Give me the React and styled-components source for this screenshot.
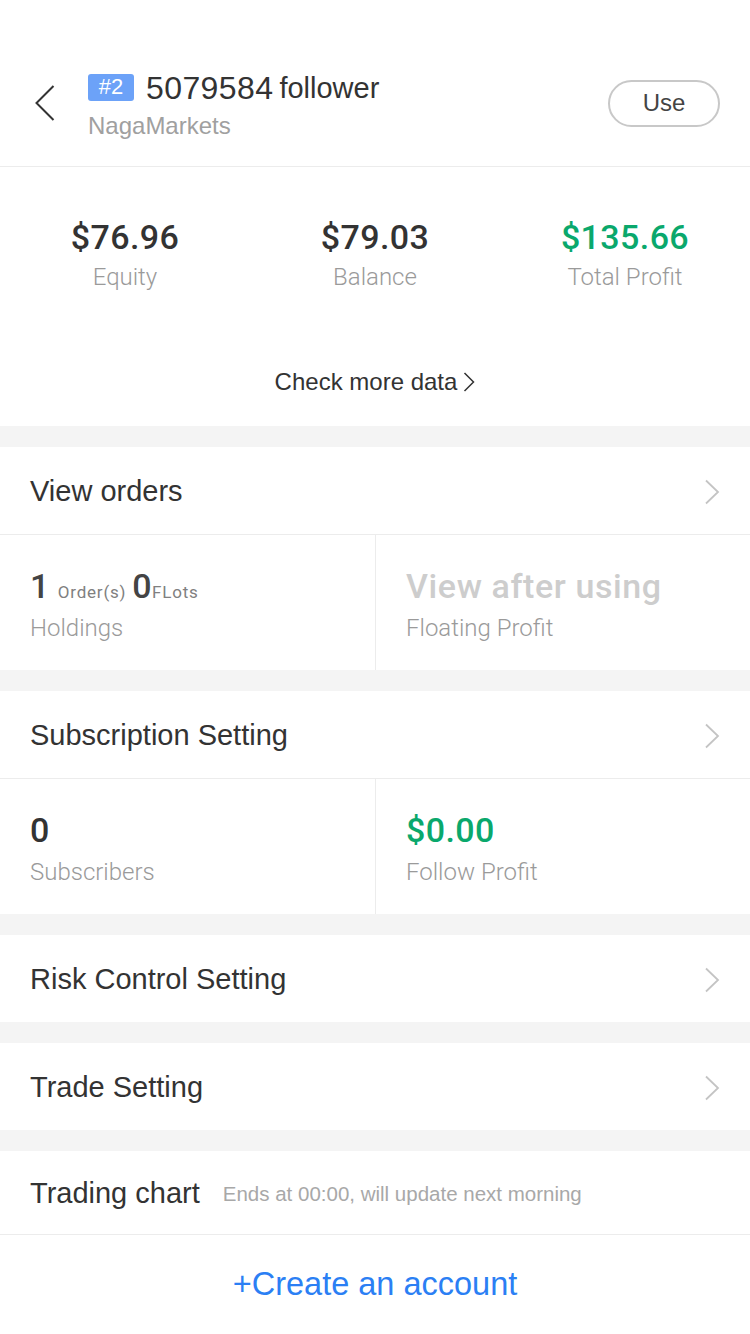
import React from "react";
import styled, { createGlobalStyle } from "styled-components";

const Global = createGlobalStyle`
  html, body { margin: 0; padding: 0; background: #fff; }
  body { font-family: "Liberation Sans", Arial, sans-serif; -webkit-font-smoothing: antialiased; }
  * { box-sizing: border-box; }
`;

const Page = styled.div`
  width: 750px;
  min-height: 1334px;
  background: #fff;
  display: flex;
  flex-direction: column;
`;

const Header = styled.header`
  height: 167px;
  padding: 40px 30px 0 35px;
  display: flex;
  align-items: center;
  border-bottom: 1px solid #ececec;
`;

const BackBtn = styled.button`
  border: 0;
  background: none;
  padding: 0;
  width: 53px;
  height: 36px;
  display: flex;
  align-items: center;
  cursor: pointer;
`;

const TitleBlock = styled.div`
  flex: 1;
  display: flex;
  flex-direction: column;
  gap: 6px;
  padding-top: 6px;
`;

const TitleLine = styled.div`
  display: flex;
  align-items: center;
  height: 34px;
  color: #333;
`;

const Badge = styled.span`
  background: #6ca2f8;
  color: #fff;
  border-radius: 3px;
  font-size: 22px;
  height: 27px;
  width: 46px;
  display: inline-flex;
  align-items: center;
  justify-content: center;
  margin-right: 12px;
  margin-top: -2px;
`;

const TitleNum = styled.span`
  font-size: 32px;
  letter-spacing: 0.4px;
  margin-right: 6px;
`;

const TitleSuffix = styled.span`
  font-size: 29px;
`;

const SubTitle = styled.div`
  font-size: 24px;
  line-height: 30px;
  color: #a0a0a0;
`;

const UseBtn = styled.button`
  width: 112px;
  height: 47px;
  border: 2px solid #c8c8c8;
  border-radius: 24px;
  background: #fff;
  color: #444;
  font-family: "Liberation Sans", Arial, sans-serif;
  font-size: 24px;
  padding: 0;
`;

const Stats = styled.section`
  padding: 50px 0 29px;
  display: flex;
  flex-direction: column;
  align-items: center;
`;

const StatRow = styled.div`
  width: 100%;
  display: grid;
  grid-template-columns: repeat(3, 1fr);
`;

const Stat = styled.div`
  display: flex;
  flex-direction: column;
  align-items: center;
  gap: 5px;
`;

const Num = styled.div`
  font-family: Roboto, "Liberation Sans", sans-serif;
  font-weight: 500;
  font-size: 34px;
  line-height: 40px;
  letter-spacing: 0.4px;
  color: ${(p) => p.$color || "#333"};
`;

const Label = styled.div`
  font-family: Roboto, "Liberation Sans", sans-serif;
  font-weight: 300;
  font-size: 24px;
  line-height: 30px;
  color: #9a9a9a;
`;

const MoreLink = styled.a`
  margin-top: 75px;
  font-size: 24px;
  line-height: 30px;
  color: #333;
  display: flex;
  align-items: center;
  gap: 6px;
`;

const Gap = styled.div`
  height: 21px;
  background: #f4f4f4;
`;

const Row = styled.div`
  height: ${(p) => (p.$h ? p.$h : 88)}px;
  padding: 2px 30px 0;
  display: flex;
  align-items: center;
  border-bottom: ${(p) => (p.$line ? "1px solid #ececec" : "none")};
`;

const RowTitle = styled.div`
  flex: 1;
  font-size: 29px;
  color: #333;
  display: flex;
  align-items: center;
  gap: 23px;
`;

const RowHint = styled.span`
  font-size: 20.5px;
  color: #a8a8a8;
`;

const Grid = styled.div`
  height: 135px;
  display: grid;
  grid-template-columns: 1fr 1fr;
`;

const Cell = styled.div`
  padding: 31px 30px 0;
  display: flex;
  flex-direction: column;
  gap: 7px;
  & + & { border-left: 1px solid #ececec; }
`;

const Small = styled.span`
  font-size: 17px;
  font-weight: 400;
  line-height: 1;
  color: #808080;
  margin: 0 ${(p) => p.$mr || 0}px 0 ${(p) => p.$ml || 0}px;
  letter-spacing: 0.8px;
`;

const Muted = styled(Num)`
  font-size: 34px;
  color: #cdcdcd;
  letter-spacing: 0.6px;
`;

const Create = styled.div`
  flex: 1;
  height: 99px;
  display: flex;
  align-items: center;
  justify-content: center;
  font-size: 32.5px;
  color: #2b7ff4;
`;

const Chevron = ({ color = "#c4c4c4", w = 16, h = 26 }) => (
  <svg width={w} height={h} viewBox="0 0 16 26" fill="none">
    <polyline points="2,1.5 14,13 2,24.5" stroke={color} strokeWidth="1.8" />
  </svg>
);

export default function App() {
  return (
    <>
      <Global />
      <Page>
        <Header>
          <BackBtn aria-label="back">
            <svg width="20" height="36" viewBox="0 0 20 36" fill="none">
              <polyline points="18.5,1 1.5,18 18.5,35" stroke="#333" strokeWidth="2" />
            </svg>
          </BackBtn>
          <TitleBlock>
            <TitleLine>
              <Badge>#2</Badge>
              <TitleNum>5079584</TitleNum>
              <TitleSuffix>follower</TitleSuffix>
            </TitleLine>
            <SubTitle>NagaMarkets</SubTitle>
          </TitleBlock>
          <UseBtn>Use</UseBtn>
        </Header>

        <Stats>
          <StatRow>
            <Stat>
              <Num>$76.96</Num>
              <Label>Equity</Label>
            </Stat>
            <Stat>
              <Num>$79.03</Num>
              <Label>Balance</Label>
            </Stat>
            <Stat>
              <Num $color="#0aa86c">$135.66</Num>
              <Label>Total Profit</Label>
            </Stat>
          </StatRow>
          <MoreLink>
            Check more data
            <svg width="12" height="20" viewBox="0 0 12 20" fill="none">
              <polyline points="1.5,1 10.5,10 1.5,19" stroke="#333" strokeWidth="1.5" />
            </svg>
          </MoreLink>
        </Stats>

        <Gap />
        <Row $line>
          <RowTitle>View orders</RowTitle>
          <Chevron />
        </Row>
        <Grid>
          <Cell>
            <Num $color="#444">
              1<Small $ml={8} $mr={6}>Order(s)</Small>0<Small>FLots</Small>
            </Num>
            <Label>Holdings</Label>
          </Cell>
          <Cell>
            <Muted>View after using</Muted>
            <Label>Floating Profit</Label>
          </Cell>
        </Grid>

        <Gap />
        <Row $line>
          <RowTitle>Subscription Setting</RowTitle>
          <Chevron />
        </Row>
        <Grid>
          <Cell>
            <Num>0</Num>
            <Label>Subscribers</Label>
          </Cell>
          <Cell>
            <Num $color="#0aa86c">$0.00</Num>
            <Label>Follow Profit</Label>
          </Cell>
        </Grid>

        <Gap />
        <Row $h={87}>
          <RowTitle>Risk Control Setting</RowTitle>
          <Chevron />
        </Row>
        <Gap />
        <Row $h={87}>
          <RowTitle>Trade Setting</RowTitle>
          <Chevron />
        </Row>
        <Gap />
        <Row $h={84} $line>
          <RowTitle>
            Trading chart
            <RowHint>Ends at 00:00, will update next morning</RowHint>
          </RowTitle>
        </Row>
        <Create>+Create an account</Create>
      </Page>
    </>
  );
}
